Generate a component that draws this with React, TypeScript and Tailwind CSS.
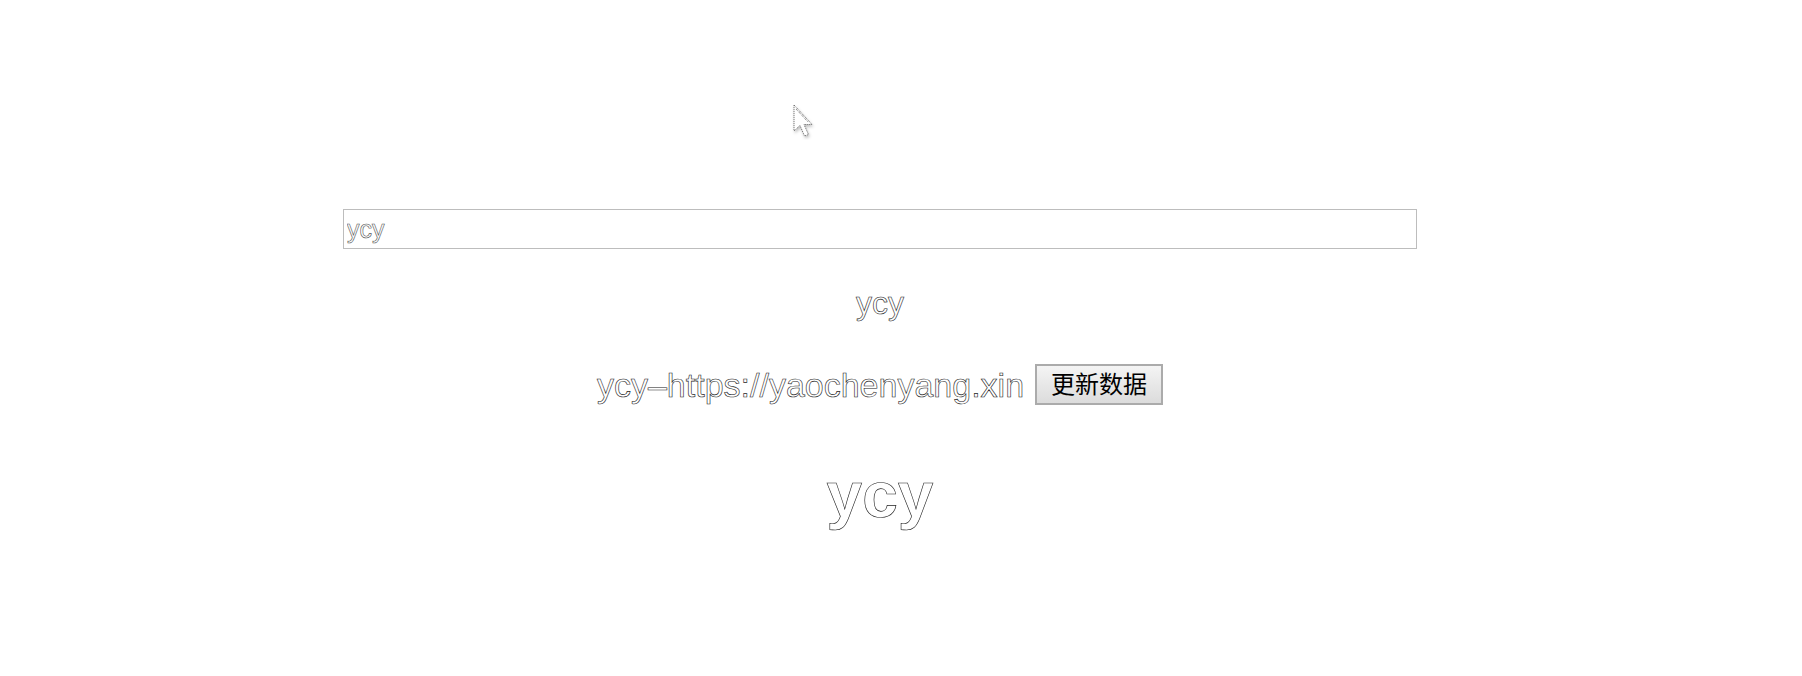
import React, { useState } from "react";

export default function App() {
  const [val, setVal] = useState("ycy");
  const outline = "text-transparent [-webkit-text-stroke:0.6px_#222]";
  return (
    <div className="relative w-[1802px] h-[676px] bg-white overflow-hidden font-['Liberation_Sans',Arial,sans-serif]">
      <div className="w-[1760px] flex flex-col items-center pt-[209px]">
        <input
          value={val}
          onChange={(e) => setVal(e.target.value)}
          className="w-[1074px] h-[40px] border border-[#bdbdbd] px-[3px] text-[25px] outline-none text-transparent [-webkit-text-stroke:0.6px_#555] font-['Liberation_Sans',Arial,sans-serif]"
        />
        <div className={`mt-[36px] text-[32px] leading-[36px] ${outline}`}>ycy</div>
        <div className="mt-[43px] flex items-center gap-[11px] h-[41px]">
          <span className={`text-[34px] leading-[36px] ${outline}`}>ycy–https://yaochenyang.xin</span>
          <button className="w-[128px] h-[41px] border-2 border-[#ababab] bg-gradient-to-b from-[#f4f4f4] to-[#dcdcdc] text-[24px] text-black leading-none font-['Liberation_Sans','Noto_Sans_CJK_SC',sans-serif]">
            更新数据
          </button>
        </div>
        <h1 className={`mt-[54px] text-[64px] leading-[72px] font-bold ${outline}`}>ycy</h1>
      </div>
      <svg
        className="absolute left-[792px] top-[104px]"
        width="26"
        height="36"
        viewBox="0 0 26 36"
      >
        <defs>
          <filter id="sh" x="-30%" y="-30%" width="160%" height="160%">
            <feDropShadow dx="1" dy="2" stdDeviation="1.5" floodColor="#000" floodOpacity="0.25" />
          </filter>
        </defs>
        <path
          d="M2 1 L2 27 L8 21.5 L12.5 32 L16.5 30.5 L12 20.5 L20 20.5 Z"
          fill="#fff"
          stroke="#555"
          strokeWidth="0.8"
          strokeDasharray="1.2 0.8"
          filter="url(#sh)"
        />
        <path d="M4 5 L16 18" stroke="#444" strokeWidth="0.8" strokeDasharray="1 1" fill="none" />
      </svg>
    </div>
  );
}
